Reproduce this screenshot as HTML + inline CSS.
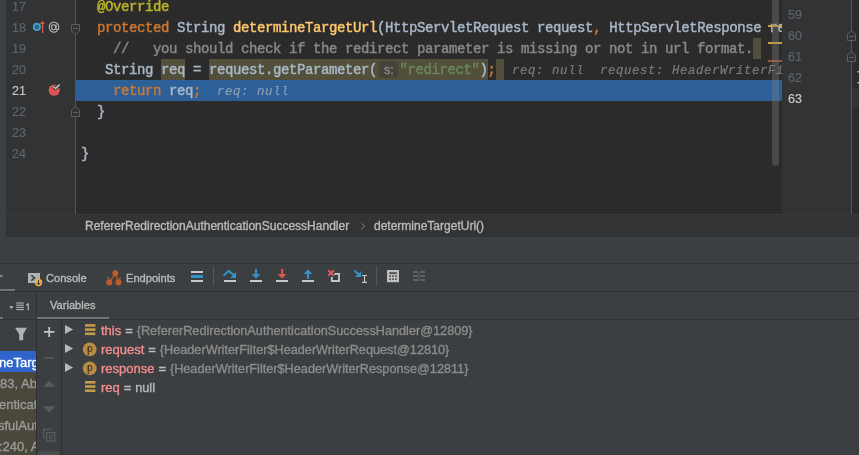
<!DOCTYPE html>
<html><head><meta charset="utf-8">
<style>
*{margin:0;padding:0;box-sizing:border-box}
html,body{width:859px;height:455px;overflow:hidden;background:#3C3F41}
body{position:relative;font-family:"Liberation Sans",sans-serif}
.cl,.ui,.ln{will-change:transform}
.a{position:absolute}
.mono{font-family:"Liberation Mono",monospace;font-size:14px;letter-spacing:-0.4px;white-space:pre;-webkit-text-stroke:0.45px}
.ln{position:absolute;font-family:"Liberation Sans",sans-serif;font-size:12.5px;color:#606366;text-align:right;width:20px;line-height:21px;height:21px;-webkit-text-stroke:0.2px}
.cl{position:absolute;left:5.3px;height:21px;line-height:23px;color:#A9B7C6}
.kw{color:#CC7832}
.an{color:#BBB529}
.fn{color:#FFC66D}
.cm{color:#888888}
.st{color:#6A8759}
.hl{background:#52503A}
.inl{color:#7A7A7A;font-style:italic;font-size:12.3px;letter-spacing:0.62px;-webkit-text-stroke:0.2px}
.ui{font-family:"Liberation Sans",sans-serif;white-space:pre;position:absolute;-webkit-text-stroke:0.35px}
</style></head><body>
<div class="a" style="left:0;top:0;width:6px;height:237px;background:#3C3F41"></div>
<div class="a" style="left:6px;top:0;width:1px;height:237px;background:#2F3133"></div>
<div class="a" style="left:7px;top:0;width:68px;height:214px;background:#313335"></div>
<div class="a" style="left:75px;top:0;width:1px;height:214px;background:#555555"></div>
<div class="a" style="left:782px;top:0;width:70px;height:214px;background:#313335"></div>
<div class="a" style="left:851px;top:0;width:1px;height:214px;background:#555555"></div>
<div class="a" style="left:852px;top:0;width:7px;height:214px;background:#2B2B2B"></div>
<div class="a" style="left:852px;top:88px;width:7px;height:21px;background:#323232"></div>
<div class="ln" style="left:6px;top:-3px">17</div>
<div class="ln" style="left:6px;top:18px">18</div>
<div class="ln" style="left:6px;top:39px">19</div>
<div class="ln" style="left:6px;top:60px">20</div>
<div class="ln" style="left:6px;top:81px;color:#C4C4C4">21</div>
<div class="ln" style="left:6px;top:102px">22</div>
<div class="ln" style="left:6px;top:123px">23</div>
<div class="ln" style="left:6px;top:144px">24</div>
<div class="ln" style="left:782px;top:5px">59</div>
<div class="ln" style="left:782px;top:26px">60</div>
<div class="ln" style="left:782px;top:47px">61</div>
<div class="ln" style="left:782px;top:68px">62</div>
<div class="ln" style="left:782px;top:89px;color:#C8C8C8">63</div>
<div class="a" style="left:76px;top:0;width:706px;height:214px;background:#2B2B2B;overflow:hidden">
<div class="a" style="left:0;top:80px;width:706px;height:21px;background:#2D6099"></div>
<div class="cl mono" style="top:-4px">  <span class="an">@Override</span></div>
<div class="cl mono" style="top:17px">  <span class="kw">protected </span>String <span class="fn">determineTargetUrl</span>(HttpServletRequest request<span class="kw">, </span>HttpServletResponse re</div>
<div class="a" style="left:677.3px;top:38px;width:8px;height:21px;background:#52503A"></div>
<div class="cl mono" style="top:38px">    <span class="cm">//   you should check if the redirect parameter is missing or not in url format.</span></div>
<div class="a" style="left:420px;top:59px;width:8px;height:21px;background:#52503A"></div>
<div class="a" style="left:85.3px;top:59px;width:24px;height:21px;background:#52503A"></div>
<div class="a" style="left:132.5px;top:59px;width:279.4px;height:21px;background:#52503A"></div>
<div class="cl mono" style="top:59px">   String <span>req</span> = <span>request.getParameter(<span style="display:inline-block;width:22.5px"></span><span class="st">"redirect"</span>)</span><span class="kw">;</span></div>
<div class="cl mono" style="top:59px;left:435.9px"><span class="inl">req: null  request: HeaderWriterFi</span></div>
<div class="a" style="left:303.2px;top:61.3px;width:19px;height:16.4px;border-radius:4px;background:#45433A"></div>
<div class="ui" style="left:307.5px;top:60.5px;font-size:12.5px;line-height:18px;color:#8E8E88">s:</div>
<div class="cl mono" style="top:80px">    <span class="kw">return </span>req<span class="kw">;</span>  <span class="inl" style="color:#8A9DB3">req: null</span></div>
<div class="cl mono" style="top:101px">  }</div>
<div class="cl mono" style="top:143px">}</div>
<div class="a" style="left:692px;top:25px;width:14px;height:2px;background:#D0A23C"></div>
<div class="a" style="left:692px;top:42px;width:14px;height:2px;background:#D0A23C"></div>
<div class="a" style="left:692px;top:60px;width:14px;height:2px;background:#9A5535"></div>
<div class="a" style="left:696px;top:-4px;width:7px;height:170px;border-radius:4px;background:rgba(130,130,130,0.35)"></div>
</div>
<div class="a" style="left:7px;top:214px;width:852px;height:1px;background:#393B3D"></div>
<div class="a" style="left:7px;top:215px;width:852px;height:22px;background:#313335"></div>
<div class="a" style="left:782px;top:214px;width:1px;height:23px;background:#2F3032"></div>
<div class="ui" style="left:85px;top:218px;font-size:12px;line-height:16px;color:#BBBBBB">RefererRedirectionAuthenticationSuccessHandler</div>
<div class="ui" style="left:374px;top:218px;font-size:12px;line-height:16px;color:#BBBBBB">determineTargetUrl()</div>
<div class="a" style="left:0;top:263px;width:859px;height:1px;background:#2E3032"></div>
<div class="a" style="left:0;top:291px;width:859px;height:1px;background:#2E3032"></div>
<div class="a" style="left:0;top:289px;width:15px;height:2px;background:#6F7478"></div>
<div class="a" style="left:36px;top:292px;width:1px;height:163px;background:#2E3032"></div>
<div class="a" style="left:37px;top:317px;width:72px;height:2px;background:#6F7478"></div>
<div class="a" style="left:0;top:317px;width:3px;height:2px;background:#6F7478"></div>
<div class="a" style="left:0;top:319px;width:859px;height:1px;background:#2E3032"></div>
<div class="a" style="left:61px;top:320px;width:1px;height:135px;background:#2E3032"></div>
<div class="ui" style="left:46px;top:270px;font-size:11.1px;line-height:16px;color:#BBBBBB">Console</div>
<div class="ui" style="left:126px;top:270px;font-size:11.1px;line-height:16px;color:#BBBBBB">Endpoints</div>
<div class="ui" style="left:50px;top:297px;font-size:11.1px;line-height:16px;color:#BBBBBB">Variables</div>
<div class="ui" style="left:101px;top:322px;font-size:13px;line-height:18px;color:#BBBBBB"><span style="color:#F48E8E">this</span><span style="word-spacing:0.3px"> = </span><span style="color:#8C8C8C;font-size:12.7px">{RefererRedirectionAuthenticationSuccessHandler@12809}</span></div>
<div class="ui" style="left:101px;top:341px;font-size:13px;line-height:18px;color:#BBBBBB"><span style="color:#F48E8E">request</span><span style="word-spacing:0.3px"> = </span><span style="color:#8C8C8C;font-size:12.7px">{HeaderWriterFilter$HeaderWriterRequest@12810}</span></div>
<div class="ui" style="left:101px;top:360px;font-size:13px;line-height:18px;color:#BBBBBB"><span style="color:#F48E8E">response</span><span style="word-spacing:0.3px"> = </span><span style="color:#8C8C8C;font-size:12.7px">{HeaderWriterFilter$HeaderWriterResponse@12811}</span></div>
<div class="ui" style="left:101px;top:379px;font-size:13px;line-height:18px;color:#BBBBBB"><span style="color:#F48E8E">req</span><span style="word-spacing:0.3px"> = </span><span style="color:#BBBBBB;font-size:12.7px">null</span></div>
<div class="a" style="left:0;top:351px;width:36px;height:21px;background:#2F65CA"></div>
<div class="a" style="left:0;top:372px;width:36px;height:83px;background:#4A473B"></div>
<div class="a" style="left:0;top:351px;width:36px;height:104px;overflow:hidden">
<div class="ui" style="left:-1px;top:3px;font-size:13px;line-height:18px;color:#FFFFFF">neTarget</div>
<div class="ui" style="left:0px;top:24px;font-size:13px;line-height:18px;color:#9A9A9A">83, Abs</div>
<div class="ui" style="left:-1px;top:45px;font-size:13px;line-height:18px;color:#9A9A9A">enticati</div>
<div class="ui" style="left:-2px;top:66px;font-size:13px;line-height:18px;color:#9A9A9A">sfulAuth</div>
<div class="ui" style="left:-1px;top:87px;font-size:13px;line-height:18px;color:#9A9A9A">:240, Ab</div>
</div>
<svg class="a" style="left:0;top:0" width="859" height="455" viewBox="0 0 859 455">
<path d="M361.5,223.3L364.8,226.2L361.5,229.1" fill="none" stroke="#7A7A7A" stroke-width="1"/>
<!-- fold markers left -->
<path d="M71.5,24.5H79.5V31L75.5,34.5L71.5,31Z" fill="#313335" stroke="#5E5E5E" stroke-width="1"/>
<path d="M73,28.5H78" stroke="#5E5E5E" stroke-width="1"/>
<path d="M71.5,116.5H79.5V110L75.5,106.5L71.5,110Z" fill="#313335" stroke="#5E5E5E" stroke-width="1"/>
<path d="M73,112.5H78" stroke="#5E5E5E" stroke-width="1"/>
<!-- fold markers right -->
<path d="M847.5,40.5H855.5V34L851.5,30.5L847.5,34Z" fill="#313335" stroke="#5E5E5E" stroke-width="1"/>
<path d="M849,36.5H854" stroke="#5E5E5E" stroke-width="1"/>
<path d="M847.5,61.5H855.5V55L851.5,51.5L847.5,55Z" fill="#313335" stroke="#5E5E5E" stroke-width="1"/>
<path d="M849,57.5H854" stroke="#5E5E5E" stroke-width="1"/>
<rect x="857.5" y="71" width="1.5" height="1.5" fill="#A9B7C6"/>
<rect x="857.5" y="82" width="1.5" height="1.5" fill="#A9B7C6"/>
<!-- override icon -->
<circle cx="36.9" cy="26.9" r="2.95" fill="none" stroke="#3E9FCB" stroke-width="2.2"/>
<circle cx="36.9" cy="26.9" r="0.85" fill="#3E9FCB"/>
<path d="M39.9,23.9L42.5,20.8L45,23.9Z" fill="#DB5A55"/>
<rect x="41.9" y="23" width="1.35" height="10" fill="#DB5A55"/>
<!-- @ -->
<path d="M57.09,31.03A4.8,5 0 1 1 58.8,27.2C58.8,29.2 58,29.9 57.2,29.9C56.5,29.9 56.1,29.4 56.1,28.6V24.4" fill="none" stroke="#B5B5B5" stroke-width="1.1"/>
<ellipse cx="53.6" cy="27.3" rx="2.1" ry="2.5" fill="none" stroke="#B5B5B5" stroke-width="1.1"/>
<!-- breakpoint -->
<circle cx="54.2" cy="90.2" r="5.6" fill="#D9554F"/>
<path d="M53.1,86.5L55.5,88.5L59.6,84.6" fill="none" stroke="#2B2B2B" stroke-width="3"/>
<path d="M53.1,86.5L55.5,88.5L59.6,84.6" fill="none" stroke="#C8C8C8" stroke-width="1.5"/>
<!-- console icon -->
<rect x="28" y="273" width="12" height="10" fill="#AFB1B3"/>
<path d="M31.3,275.3L34.6,277.9L31.3,280.6" fill="none" stroke="#3C3F41" stroke-width="1.5"/>
<circle cx="38.5" cy="282.5" r="3.7" fill="#F4AF3D"/>
<path d="M38.5,279.8V284.6M36.6,282.8L38.5,284.8L40.4,282.8" fill="none" stroke="#3C3F41" stroke-width="1"/>
<!-- endpoints -->
<g fill="#C35A2A" stroke="#C35A2A" stroke-width="1.3">
<circle cx="115.3" cy="273.3" r="2.3"/>
<circle cx="109.3" cy="282.5" r="2.4"/>
<circle cx="118.4" cy="282.5" r="2.4"/>
<path d="M115.3,273.3L109.3,282.5M115.3,273.3L118.4,282.5M109.3,282.5L107.6,276.7M118.4,282.5L120.4,277.4" fill="none"/>
</g>
<!-- restore layout -->
<rect x="191" y="271" width="12" height="2" fill="#C9C9C9"/>
<rect x="191" y="275" width="12" height="3" fill="#3592C4"/>
<rect x="191" y="280" width="12" height="2" fill="#C9C9C9"/>
<rect x="213" y="266" width="1" height="20" fill="#55595B"/>
<!-- step over -->
<path d="M223.5,275.8L228.7,270.8L233.6,275" fill="none" stroke="#3592C4" stroke-width="2.1"/>
<path d="M236,271.9V278.1H230Z" fill="#3592C4"/>
<rect x="224" y="280" width="12" height="2" fill="#C9C9C9"/>
<!-- step into -->
<rect x="255" y="269" width="2" height="6" fill="#3592C4"/>
<path d="M251.5,274H260.5L256,278.5Z" fill="#3592C4"/>
<rect x="250" y="280" width="12" height="2" fill="#C9C9C9"/>
<!-- force step into -->
<rect x="281.2" y="269" width="2" height="6" fill="#DB5850"/>
<path d="M277.5,274H286.5L282.2,278.5Z" fill="#DB5850"/>
<rect x="276" y="280" width="12" height="2" fill="#C9C9C9"/>
<!-- step out -->
<path d="M303.6,274H312.2L307.9,269.3Z" fill="#3592C4"/>
<rect x="306.9" y="273.5" width="2.2" height="5.3" fill="#3592C4"/>
<rect x="302" y="280" width="12" height="2" fill="#C9C9C9"/>
<!-- drop frame -->
<path d="M328.3,270.3L333.8,275.8M333.8,270.3L328.3,275.8" stroke="#DB5860" stroke-width="2.1"/>
<path d="M335,273.8H339V281H331.8V277" fill="none" stroke="#C9C9C9" stroke-width="1.8"/>
<path d="M334.5,273H337L334.5,275.5Z" fill="#C9C9C9"/>
<!-- run to cursor -->
<path d="M354.4,270.4L359,275" stroke="#3592C4" stroke-width="2"/>
<path d="M361.1,271V277H355Z" fill="#3592C4"/>
<path d="M364.5,275.5V282.4M362,275.5H367M362,282.4H367" fill="none" stroke="#C9C9C9" stroke-width="1.1"/>
<rect x="376" y="266" width="1" height="20" fill="#55595B"/>
<!-- calculator -->
<rect x="387" y="270" width="12" height="12.2" fill="#C0C0C0"/>
<rect x="389.2" y="272.3" width="7.6" height="1.6" fill="#3C3F41"/>
<g fill="#3C3F41">
<rect x="389.3" y="275.2" width="1.6" height="1.6"/><rect x="392.2" y="275.2" width="1.6" height="1.6"/><rect x="395.1" y="275.2" width="1.6" height="1.6"/>
<rect x="389.3" y="278.3" width="1.6" height="1.6"/><rect x="392.2" y="278.3" width="1.6" height="1.6"/><rect x="395.1" y="278.3" width="1.6" height="1.6"/>
</g>
<!-- streams (disabled) -->
<g fill="#5F6366">
<rect x="413" y="271" width="4.8" height="2"/><rect x="413" y="275" width="4.8" height="2"/><rect x="413" y="279" width="4.8" height="2"/>
<rect x="420" y="271" width="5" height="2"/><rect x="420" y="275" width="5" height="2"/><rect x="420" y="279" width="5" height="2"/>
</g>
<path d="M420,271.5C418.5,272 419,276 418.6,277C418.3,279 418.5,280 418,281" fill="none" stroke="#5F6366" stroke-width="1"/>
<!-- frames header -->
<path d="M9.2,306.2H13.5L11.35,308.9Z" fill="#BBBBBB"/>
<g fill="#BBBBBB"><rect x="16.2" y="302.5" width="7.7" height="1"/><rect x="16.2" y="304.7" width="7.7" height="1"/><rect x="16.2" y="306.9" width="7.7" height="1"/><rect x="16.2" y="309.1" width="7.7" height="1"/></g>
<path d="M26.3,305.2L28.2,303.9V310.2" fill="none" stroke="#BBBBBB" stroke-width="1.2"/>
<rect x="0" y="275.5" width="2.5" height="1.2" fill="#BBBBBB"/>
<path d="M15.1,327.8H26.9L23.2,334.3V340.2H19.2V334.3Z" fill="#AFB1B3"/>
<!-- vars toolbar -->
<path d="M49.2,327V337M44,331.9H54.4" stroke="#C9C9C9" stroke-width="1.7"/>
<path d="M44,357.9H54.2" stroke="#585C5E" stroke-width="1.5"/>
<path d="M43,386.8H55.3L49.2,381Z" fill="#585C5E"/>
<path d="M43,406.3H55.3L49.2,412.5Z" fill="#585C5E"/>
<path d="M43.6,438.5V429.4H51.5" fill="none" stroke="#585C5E" stroke-width="1.3"/>
<rect x="46.6" y="432.6" width="8.2" height="8.4" fill="none" stroke="#585C5E" stroke-width="1.3"/>
<path d="M48.8,435.2H52.8M48.8,437H52.8M48.8,438.8H52.8" stroke="#585C5E" stroke-width="0.9"/>
<rect x="38" y="451.5" width="22" height="6" rx="2" fill="#4B4E50"/>
<!-- tree triangles -->
<g fill="#B4B6B8">
<path d="M65,325V334L73.1,329.5Z"/>
<path d="M65,344V353L73.1,348.5Z"/>
<path d="M65,363V372L73.1,367.5Z"/>
</g>
<!-- field icons -->
<g fill="#C49A4C">
<rect x="85" y="324.1" width="10.4" height="2.6"/><rect x="85" y="328.3" width="10.4" height="2.6"/><rect x="85" y="332.5" width="10.4" height="2.6"/>
<rect x="85" y="381" width="10.4" height="2.6"/><rect x="85" y="385.2" width="10.4" height="2.6"/><rect x="85" y="389.4" width="10.4" height="2.6"/>
</g>
<circle cx="89.7" cy="349.3" r="6.9" fill="#B88B42"/>
<circle cx="89.7" cy="368.3" r="6.9" fill="#B88B42"/>
<g fill="none" stroke="#34302A" stroke-width="1">
<path d="M88.2,346.2V355.2"/><ellipse cx="90" cy="349" rx="1.9" ry="2.6"/>
<path d="M88.2,365.2V374.2"/><ellipse cx="90" cy="368" rx="1.9" ry="2.6"/>
</g>
</svg>
</body></html>
